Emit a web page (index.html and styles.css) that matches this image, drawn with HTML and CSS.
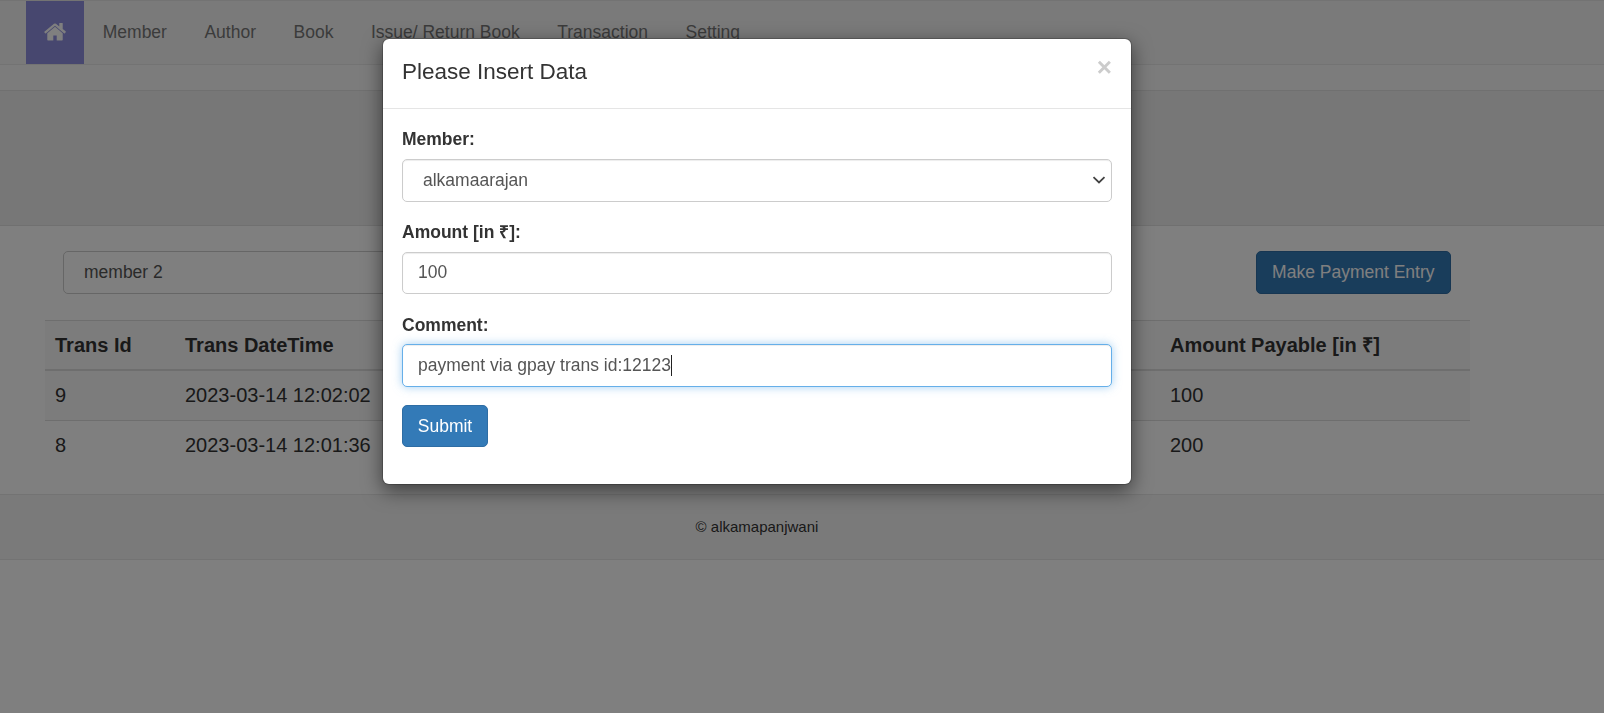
FILE: index.html
```html
<!DOCTYPE html>
<html>
<head>
    <meta charset="utf-8">
    <title>Transaction</title>
    <link rel="stylesheet" href="styles.css">
</head>
<body>
<nav class="navbar">
    <a class="nav-home" href="#">
        <svg class="home-icon" viewBox="0 0 1792 1792"><path d="M1472 992v480q0 26-19 45t-45 19h-384v-384H768v384H384q-26 0-45-19t-19-45V992q0-1 .5-3t.5-3l575-474 575 474q1 2 1 6zm223-69l-62 74q-8 9-21 11h-3q-13 0-21-7L896 424l-692 577q-12 8-24 7-13-2-21-11l-62-74q-8-10-7-23.500t11-21.500l719-599q32-26 76-26t76 26l244 204V256q0-14 9-23t23-9h192q14 0 23 9t9 23v408l219 182q10 8 11 21.500t-7 23.500z"/></svg>
    </a>
    <a class="nav-link" href="#">Member</a>
    <a class="nav-link" href="#">Author</a>
    <a class="nav-link" href="#">Book</a>
    <a class="nav-link" href="#">Issue/ Return Book</a>
    <a class="nav-link" href="#">Transaction</a>
    <a class="nav-link" href="#">Setting</a>
</nav>
<div class="nav-gap"></div>
<div class="jumbotron"></div>

<div class="content">
    <div class="toolbar">
        <input class="search" type="text" value="member 2"/>
        <button class="btn">Make Payment Entry</button>
    </div>
    <table class="trans-table">
        <colgroup>
            <col class="col-id">
            <col class="col-date">
            <col>
            <col class="col-payable">
        </colgroup>
        <thead>
            <tr>
                <th>Trans Id</th>
                <th>Trans DateTime</th>
                <th></th>
                <th>Amount Payable [in ₹]</th>
            </tr>
        </thead>
        <tbody>
            <tr>
                <td>9</td>
                <td>2023-03-14 12:02:02</td>
                <td></td>
                <td>100</td>
            </tr>
            <tr>
                <td>8</td>
                <td>2023-03-14 12:01:36</td>
                <td></td>
                <td>200</td>
            </tr>
        </tbody>
    </table>
</div>

<footer class="footer">© alkamapanjwani</footer>

<div class="backdrop"></div>
<div class="modal">
    <div class="modal-header">
        <h4 class="modal-title">Please Insert Data</h4>
        <span class="close">×</span>
    </div>
    <form class="modal-body">
        <div class="form-group">
            <label for="member">Member:</label>
            <select class="form-control select-control" id="member">
                <option>alkamaarajan</option>
            </select>
        </div>
        <div class="form-group">
            <label for="amount">Amount [in ₹]:</label>
            <input class="form-control" type="text" id="amount" value="100"/>
        </div>
        <div class="form-group">
            <label>Comment:</label>
            <div class="form-control is-focused">payment via gpay trans id:12123<span class="caret"></span></div>
        </div>
        <div class="form-group">
            <button class="btn btn-submit" type="button">Submit</button>
        </div>
    </form>
</div>
</body>
</html>
```
FILE: styles.css
```css
* {
    box-sizing: border-box;
}

body {
    margin: 0;
    height: 713px;
    overflow: hidden;
    background-color: #fff;
    font-family: "Liberation Sans", Arial, sans-serif;
    font-size: 17.5px;
    line-height: 25px;
    color: #333;
}

.navbar {
    display: flex;
    height: 65px;
    padding-left: 26px;
    background-color: #f5f5f5;
    border-top: 1px solid #e7e7e7;
    border-bottom: 1px solid #e7e7e7;
}

.nav-home {
    display: flex;
    align-items: center;
    justify-content: center;
    width: 58px;
    padding-bottom: 2px;
    background-color: #8e8edf;
}

.home-icon {
    width: 24px;
    height: 24px;
    fill: #fff;
}

.nav-link {
    padding: 19px 18.750px;
    color: #777;
    text-decoration: none;
}

.nav-gap {
    height: 25px;
    background-color: #f8f8f8;
}

.jumbotron {
    height: 136px;
    background-color: #eee;
    border-top: 1px solid #e0e0e0;
    border-bottom: 1px solid #e0e0e0;
}

.content {
    height: 268px;
    padding: 25px 134px 0 45px;
    background-color: #fff;
}

.toolbar {
    display: flex;
    justify-content: space-between;
    padding: 0 19px 0 18px;
}

.search {
    width: 500px;
    height: 43px;
    padding: 0 20px;
    border: 1px solid #ccc;
    border-radius: 5px;
    background-color: #fff;
    font: inherit;
    color: #555;
}

.btn {
    height: 43px;
    padding: 0 15.500px;
    border: 1px solid #2e6da4;
    border-radius: 5px;
    background-color: #337ab7;
    font: inherit;
    color: #fff;
}

.trans-table {
    width: 1425px;
    margin-top: 26px;
    border-collapse: collapse;
    table-layout: fixed;
}

.col-id {
    width: 130px;
}

.col-date {
    width: 210px;
}

.col-payable {
    width: 310px;
}

.trans-table th {
    height: 49px;
    padding: 1px 10px 0;
    text-align: left;
    font-size: 20px;
    color: #333;
    border-top: 1px solid #ddd;
    border-bottom: 2px solid #ddd;
    background-color: #f9f9f9;
}

.trans-table td {
    height: 50px;
    padding: 1px 10px 0;
    font-size: 20px;
    color: #333;
    border-bottom: 1px solid #ddd;
}

.trans-table tbody tr:first-child {
    background-color: #f9f9f9;
}

.trans-table tbody tr:first-child td {
    height: 51px;
}

.trans-table tbody tr:last-child td {
    padding-top: 0;
    padding-bottom: 1px;
    border-bottom: none;
}

.footer {
    height: 66px;
    padding: 19px 90px 0 0;
    text-align: center;
    font-size: 15px;
    color: #333;
    background-color: #f5f5f5;
    border-top: 1px solid #e7e7e7;
    border-bottom: 1px solid #e7e7e7;
}

.backdrop {
    position: fixed;
    top: 0;
    right: 0;
    bottom: 0;
    left: 0;
    background-color: rgba(0, 0, 0, 0.5);
}

.modal {
    position: absolute;
    top: 38px;
    left: 382px;
    width: 750px;
    background-color: #fff;
    border: 1px solid rgba(0, 0, 0, 0.2);
    border-radius: 7px;
    background-clip: padding-box;
    box-shadow: 0 6px 19px rgba(0, 0, 0, 0.5);
}

.modal-header {
    display: flex;
    justify-content: space-between;
    padding: 17px 19px 20px;
    border-bottom: 1px solid #e5e5e5;
}

.modal-title {
    margin: 0;
    font-size: 22.500px;
    font-weight: normal;
    line-height: 32px;
    color: #333;
}

.close {
    margin-top: 1px;
    font-size: 26px;
    font-weight: bold;
    line-height: 20px;
    color: #ccc;
}

.modal-body {
    padding: 18px 19px 18.500px;
}

.form-group {
    margin-bottom: 18.750px;
}

.form-group label {
    display: block;
    margin-bottom: 8px;
    font-weight: bold;
    line-height: 24px;
}

.form-group + .form-group label {
    margin-bottom: 7.250px;
}

.form-control {
    display: block;
    width: 100%;
    height: 42.500px;
    padding: 0 15px;
    border: 1px solid #ccc;
    border-radius: 5px;
    background-color: #fff;
    font: inherit;
    color: #555;
    box-shadow: inset 0 1px 1px rgba(0, 0, 0, 0.075);
}

.select-control {
    padding-left: 20px;
    appearance: none;
    background-image: url("data:image/svg+xml,%3Csvg xmlns='http://www.w3.org/2000/svg' width='14' height='8'%3E%3Cpath d='M1.500 1.200L7 6.500l5.500-5.300' fill='none' stroke='%23444' stroke-width='1.800'/%3E%3C/svg%3E");
    background-repeat: no-repeat;
    background-position: right 5px center;
}

.is-focused {
    line-height: 40px;
    border-color: #66afe9;
    box-shadow: inset 0 1px 1px rgba(0, 0, 0, 0.075), 0 0 10px rgba(102, 175, 233, 0.6);
}

.caret {
    display: inline-block;
    width: 1px;
    height: 21px;
    margin-left: 0;
    vertical-align: -5px;
    background-color: #222;
}

.btn-submit {
    display: block;
    width: 86px;
    height: 41.500px;
    padding: 0;
    margin-bottom: 1px;
}
```
